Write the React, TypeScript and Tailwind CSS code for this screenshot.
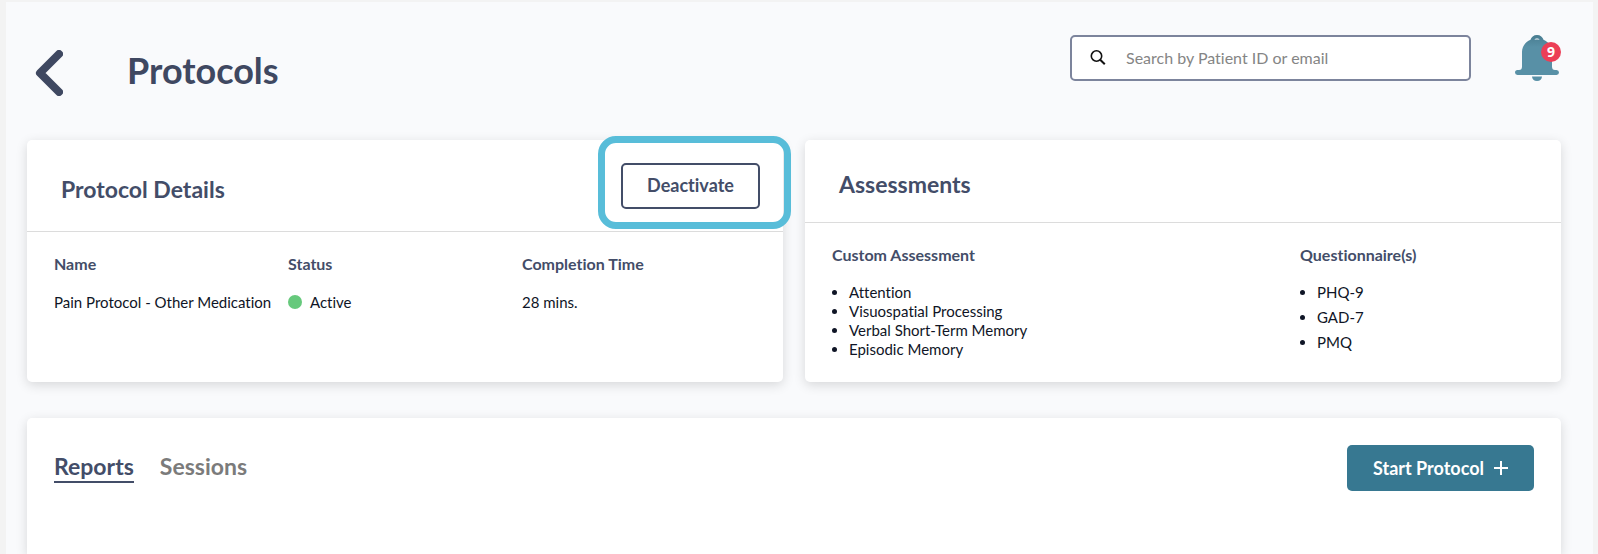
import { useState, type ReactNode } from 'react';

const customAssessments = [
  'Attention',
  'Visuospatial Processing',
  'Verbal Short-Term Memory',
  'Episodic Memory',
];

const questionnaires = ['PHQ-9', 'GAD-7', 'PMQ'];

const BackIcon = () => (
  <svg viewBox="0 0 28 46" className="h-[46px] w-7" fill="none" aria-hidden="true">
    <path
      d="M24 4 5 23 24 42"
      stroke="currentColor"
      strokeWidth="8"
      strokeLinecap="round"
      strokeLinejoin="round"
    />
  </svg>
);

const SearchIcon = () => (
  <svg viewBox="0 0 16 16" className="size-4 shrink-0" fill="none" stroke="#111" aria-hidden="true">
    <circle cx="6.5" cy="6" r="5.200" strokeWidth="1.6" />
    <path d="m10.200 9.700 4.600 4.600" strokeWidth="2" />
  </svg>
);

const BellIcon = () => (
  <svg viewBox="0 0 44 46" className="h-[46px] w-11" aria-hidden="true">
    <defs>
      <linearGradient id="bell" x1="0" y1="0" x2="0" y2="1">
        <stop offset="0" stopColor="#487c90" />
        <stop offset="0.3" stopColor="#5890a6" />
        <stop offset="1" stopColor="#5890a6" />
      </linearGradient>
    </defs>
    <path
      d="M22 0c-3.400 0-5.800 2.100-6.500 4.800C10 7.200 7 11.500 7 17v14.500c0 2.400-1 3.600-3 3.600H2.500a2.500 2.500 0 0 0 0 5h39a2.500 2.500 0 0 0 0-5H40c-2 0-3-1.200-3-3.600V17c0-5.500-3-9.800-8.500-12.200C27.800 2.100 25.400 0 22 0Z"
      fill="url(#bell)"
    />
    <path d="M19.500 4.800c.4-1.600 4.600-1.600 5 0-1.600-.5-3.400-.5-5 0Z" fill="#f9fafc" />
    <path d="M17 41.500h10c0 2.600-2 4.500-5 4.500s-5-1.900-5-4.500Z" fill="#5890a6" />
  </svg>
);

const Card = ({ children, className = '' }: { children: ReactNode; className?: string }) => (
  <section className={`rounded-[5px] bg-white shadow-[0_3px_12px_rgba(0,0,0,0.14)] ${className}`}>
    {children}
  </section>
);

const Label = ({ children }: { children: ReactNode }) => (
  <h3 className="text-base leading-5 font-bold text-[#434d68]">{children}</h3>
);

export default function App() {
  const [tab, setTab] = useState('Reports');

  return (
    <div className="min-h-screen bg-[#f3f3f3] pt-0.5 pr-[5px] pl-1.5 font-['Lato',sans-serif] text-base text-[#0f1526] [font-variant-ligatures:none]">
      <main className="flex min-h-[552px] flex-col bg-[#f9fafc] pr-8 pl-[21px]">
        <header className="flex h-[138px] items-start justify-between pt-[33px]">
          <div className="flex items-start pt-[15px] pl-2 text-[#3f4861]">
            <button type="button" aria-label="Back">
              <BackIcon />
            </button>
            <h1 className="pl-16 text-4xl leading-10 font-bold">Protocols</h1>
          </div>
          <div className="flex items-start gap-11">
            <label className="flex h-[46px] w-[401px] items-center gap-5 rounded-[5px] border-2 border-[#7c849c] bg-white pl-[18px]">
              <SearchIcon />
              <input
                type="search"
                aria-label="Search patients"
                placeholder="Search by Patient ID or email"
                className="min-w-0 flex-1 text-base outline-none placeholder:text-[#858585]"
              />
            </label>
            <button type="button" aria-label="Notifications" className="relative mr-0.5">
              <BellIcon />
              <span className="absolute top-[7px] -right-0.5 flex size-5 items-center justify-center rounded-full bg-[#ec3e56] font-['Open_Sans',sans-serif] text-sm font-bold text-white">
                9
              </span>
            </button>
          </div>
        </header>

        <div className="grid grid-cols-2 gap-[22px]">
          <Card>
            <div className="relative flex h-[92px] items-center justify-between border-b border-[#dcdcdc] pr-[23px] pl-[34px]">
              <h2 className="pt-1.5 text-[23px] leading-7 font-bold text-[#434d68]">Protocol Details</h2>
              <button
                type="button"
                className="h-[46px] w-[139px] rounded-[5px] border-2 border-[#434d68] pb-0.5 text-lg font-bold text-[#434d68]"
              >
                Deactivate
              </button>
              <div className="pointer-events-none absolute -top-1 -right-2 h-[93px] w-[193px] rounded-[18px] border-[7px] border-[#58bdd9]" />
            </div>
            <dl className="grid grid-cols-[234px_234px_1fr] px-[27px] pt-[22px]">
              <div>
                <dt className="leading-5 font-bold text-[#434d68]">Name</dt>
                <dd className="pt-[18px] text-[15px] leading-5">Pain Protocol - Other Medication</dd>
              </div>
              <div>
                <dt className="leading-5 font-bold text-[#434d68]">Status</dt>
                <dd className="flex items-center gap-2 pt-[18px] text-[15px] leading-5">
                  <span className="size-3.5 rounded-full bg-[#66c97c]" />
                  Active
                </dd>
              </div>
              <div>
                <dt className="leading-5 font-bold text-[#434d68]">Completion Time</dt>
                <dd className="pt-[18px] text-[15px] leading-5">28 mins.</dd>
              </div>
            </dl>
          </Card>

          <Card className="pb-[23px]">
            <div className="flex h-[83px] items-center border-b border-[#dcdcdc] pl-[34px]">
              <h2 className="pt-1.5 text-[23px] leading-7 font-bold text-[#434d68]">Assessments</h2>
            </div>
            <div className="grid grid-cols-[468px_1fr] px-[27px] pt-[22px]">
              <div>
                <Label>Custom Assessment</Label>
                <ul className="list-disc pt-[18px] pl-[17px] text-[15px]">
                  {customAssessments.map((name) => (
                    <li key={name} className="leading-[19px]">
                      {name}
                    </li>
                  ))}
                </ul>
              </div>
              <div>
                <Label>Questionnaire(s)</Label>
                <ul className="list-disc space-y-1.5 pt-[18px] pl-[17px] text-[15px]">
                  {questionnaires.map((name) => (
                    <li key={name} className="leading-[19px]">
                      {name}
                    </li>
                  ))}
                </ul>
              </div>
            </div>
          </Card>
        </div>

        <Card className="mt-9 flex flex-1 items-start justify-between rounded-b-none px-[27px] pt-[27px]">
          <div role="tablist" className="flex gap-[26px] pt-1.5">
            {['Reports', 'Sessions'].map((name) => (
              <button
                key={name}
                type="button"
                role="tab"
                aria-selected={tab === name}
                onClick={() => setTab(name)}
                className={
                  tab === name
                    ? 'border-b-2 border-[#434d68] text-[23px] leading-[30px] font-bold text-[#434d68]'
                    : 'border-b-2 border-transparent text-[23px] leading-[30px] font-bold text-[#7b7b7b]'
                }
              >
                {name}
              </button>
            ))}
          </div>
          <button
            type="button"
            className="flex h-[46px] w-[187px] items-center justify-center gap-2.5 rounded-[5px] bg-[#377891] text-lg font-bold text-white"
          >
            Start Protocol
            <svg viewBox="0 0 14 14" className="size-3.5" stroke="currentColor" strokeWidth="2" aria-hidden="true">
              <path d="M7 0v14M0 7h14" />
            </svg>
          </button>
        </Card>
      </main>
    </div>
  );
}
